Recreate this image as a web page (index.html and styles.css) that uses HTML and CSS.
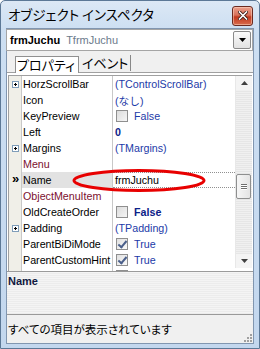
FILE: index.html
```html
<!DOCTYPE html>
<html lang="ja">
<head>
<meta charset="utf-8">
<link rel="stylesheet" href="styles.css">
</head>
<body>
<div class="window">
  <div class="titlebar">
    <span class="title">オブジェクト インスペクタ</span>
    <div class="close">
      <svg width="10" height="9" viewBox="0 0 10 9"><path d="M1.5 1 L8.5 8 M8.5 1 L1.5 8" stroke="#3a1a14" stroke-width="3.2" stroke-linecap="square"/><path d="M1.5 1 L8.5 8 M8.5 1 L1.5 8" stroke="#ffffff" stroke-width="1.6" stroke-linecap="square"/></svg>
    </div>
  </div>
  <div class="client">
    <div class="combo">
      <span class="cname">frmJuchu</span><span class="ctype">TfrmJuchu</span>
      <div class="dd"><svg width="7" height="4" viewBox="0 0 7 4"><path d="M0 0 H7 L3.5 4 Z" fill="#000"/></svg></div>
    </div>
    <div class="tabs">
      <div class="tab active">プロパティ</div>
      <div class="tab">イベント</div>
    </div>
    <div class="sheet">
      <div class="grid">
        <div class="rows">
          <div class="row"><div class="gut"><span class="plus"></span></div><div class="pname">HorzScrollBar</div><div class="pval">(TControlScrollBar)</div></div>
          <div class="row"><div class="gut"></div><div class="pname">Icon</div><div class="pval">(なし)</div></div>
          <div class="row"><div class="gut"></div><div class="pname">KeyPreview</div><div class="pval"><span class="chk"></span>False</div></div>
          <div class="row"><div class="gut"></div><div class="pname">Left</div><div class="pval bold">0</div></div>
          <div class="row"><div class="gut"><span class="plus"></span></div><div class="pname">Margins</div><div class="pval">(TMargins)</div></div>
          <div class="row"><div class="gut"></div><div class="pname ref">Menu</div><div class="pval"></div></div>
          <div class="row sel"><div class="gut"><span class="mark">»</span></div><div class="pname">Name</div><div class="pval edit">frmJuchu</div></div>
          <div class="row"><div class="gut"></div><div class="pname ref">ObjectMenuItem</div><div class="pval"></div></div>
          <div class="row"><div class="gut"></div><div class="pname">OldCreateOrder</div><div class="pval bold"><span class="chk"></span>False</div></div>
          <div class="row"><div class="gut"><span class="plus"></span></div><div class="pname">Padding</div><div class="pval">(TPadding)</div></div>
          <div class="row"><div class="gut"></div><div class="pname">ParentBiDiMode</div><div class="pval"><span class="chk on"></span>True</div></div>
          <div class="row"><div class="gut"></div><div class="pname">ParentCustomHint</div><div class="pval"><span class="chk on"></span>True</div></div>
          <div class="row"><div class="gut"></div><div class="pname"></div><div class="pval"><span class="chk"></span></div></div>
        </div>
        <div class="vscroll">
          <div class="sbtn"><svg width="7" height="4" viewBox="0 0 7 4"><path d="M0 4 H7 L3.5 0 Z" fill="#404040"/></svg></div>
          <div class="track">
            <div class="thumb"><span class="grip"></span><span class="grip"></span><span class="grip"></span></div>
          </div>
          <div class="sbtn"><svg width="7" height="4" viewBox="0 0 7 4"><path d="M0 0 H7 L3.5 4 Z" fill="#404040"/></svg></div>
        </div>
      </div>
    </div>
    <div class="help"><span class="hname">Name</span></div>
    <div class="status"><span>すべての項目が表示されています</span>
      <svg class="sizegrip" width="8" height="8" viewBox="0 0 8 8"><g fill="#a0a0a0"><rect x="6" y="0" width="2" height="2"/><rect x="3" y="3" width="2" height="2"/><rect x="6" y="3" width="2" height="2"/><rect x="0" y="6" width="2" height="2"/><rect x="3" y="6" width="2" height="2"/><rect x="6" y="6" width="2" height="2"/></g></svg>
    </div>
  </div>
  <svg class="mark-ellipse" width="260" height="349" viewBox="0 0 260 349"><ellipse cx="139" cy="180.5" rx="65" ry="10" fill="none" stroke="#e80000" stroke-width="3"/></svg>
</div>
</body>
</html>
```
FILE: styles.css
```css
* { box-sizing: border-box; }
html, body { margin: 0; padding: 0; }
body { width: 260px; height: 349px; overflow: hidden; background: #fff; }

.window {
  position: relative;
  width: 260px;
  height: 349px;
  border: 1px solid #5c7896;
  border-radius: 5px 5px 0 0;
  background: linear-gradient(#dce8f5 0px, #cddff2 28px, #c3d7ee 100%);
  padding: 0 5px 4px 5px;
  display: flex;
  flex-direction: column;
  font-family: "Liberation Sans", "Noto Sans CJK JP", sans-serif;
}

.titlebar {
  height: 27px;
  flex: none;
  display: flex;
  align-items: center;
  justify-content: space-between;
  padding: 0 1px 0 2px;
}
.title {
  font-family: "Noto Sans CJK JP", sans-serif;
  font-size: 13.5px;
  font-feature-settings: "palt";
  color: #000;
  margin-top: -1px;
}
.close {
  width: 21px;
  height: 20px;
  margin-top: 2px;
  border: 1px solid #6b2a20;
  border-radius: 3px;
  background: linear-gradient(#eba08c 0%, #d8715a 45%, #c2391f 55%, #d86b4c 100%);
  display: flex;
  align-items: center;
  justify-content: center;
  box-shadow: inset 0 0 0 1px rgba(255,220,200,0.5);
}

.client {
  flex: 1;
  display: flex;
  flex-direction: column;
  background: #f0f0f0;
  border: 1px solid #8196b0;
}

.combo {
  height: 22px;
  flex: none;
  background: #fff;
  border: 1px solid #a5a5a5;
  margin: 0 0 0 -1px;
  display: flex;
  align-items: center;
  padding-left: 3px;
  position: relative;
  font-size: 11px;
}
.cname { font-weight: bold; color: #000; }
.ctype { color: #6c7b8c; margin-left: 6px; }
.dd {
  position: absolute;
  right: 1px;
  top: 1px;
  width: 18px;
  height: 18px;
  border: 1px solid #8a8a8a;
  border-radius: 2px;
  background: linear-gradient(#fbfbfb, #e2e2e2);
  display: flex;
  align-items: center;
  justify-content: center;
}

.tabs {
  height: 22px;
  flex: none;
  display: flex;
  align-items: flex-end;
  padding-left: 8px;
  border-bottom: 1px solid #a0a0a0;
  font-family: "Noto Sans CJK JP", sans-serif;
  font-size: 13px;
  font-feature-settings: "palt";
}
.tab {
  height: 16px;
  line-height: 15px;
  padding: 0 2px 0 3px;
  border-right: 1px solid #888;
  margin-bottom: 1px;
  white-space: nowrap;
}
.tab.active {
  height: 17px;
  margin-bottom: -1px;
  line-height: 16px;
  background: #fff;
  border: 1px solid #909090;
  border-bottom: none;
  padding: 0 3px 0 1px;
}

.sheet {
  height: 198px;
  flex: none;
  padding: 2px 1px 0 1px;
  background: #fff;
}
.grid {
  height: 196px;
  border-top: 1px solid #a0a0a0;
  border-left: 1px solid #a0a0a0;
  display: flex;
  overflow: hidden;
}
.rows {
  flex: 1;
  overflow: hidden;
  font-size: 10.7px;
}
.row {
  height: 16px;
  display: grid;
  grid-template-columns: 13px 91px 1fr;
  align-items: stretch;
}
.gut {
  background: #f0efe8;
  border-right: 1px solid #c8c8c8;
  display: flex;
  align-items: center;
  justify-content: center;
  padding-left: 1px;
}
.plus {
  width: 7px;
  height: 7px;
  border: 1px solid #7f9db9;
  background: #fff;
  position: relative;
}
.plus::before { content: ""; position: absolute; left: 1px; top: 2px; width: 3px; height: 1px; background: #000; }
.plus::after { content: ""; position: absolute; left: 2px; top: 1px; width: 1px; height: 3px; background: #000; }
.mark { font-size: 13px; font-weight: bold; line-height: 12px; margin-top: -2px; color: #000; }
.pname {
  padding-left: 1px;
  border-right: 1px solid #c8c8c8;
  display: flex;
  align-items: center;
  color: #000;
  white-space: nowrap;
  overflow: hidden;
}
.pname.ref { color: #7c1030; }
.pval {
  padding-left: 2px;
  display: flex;
  align-items: center;
  color: #1c3aa8;
  white-space: nowrap;
  overflow: hidden;
}
.pval.bold { font-weight: bold; color: #0c2288; }
.row.sel .pname { background: #e2e2e2; }
.row.sel .pval {
  color: #000;
  border-top: 1px dotted #909090;
  border-bottom: 1px dotted #909090;
}
.chk {
  width: 12px;
  height: 12px;
  border: 1px solid #8f8f8f;
  background: linear-gradient(135deg, #dcdcdc, #f6f6f6);
  margin: 0 6px 0 1px;
  position: relative;
  flex: none;
}
.chk.on { background: linear-gradient(135deg, #e0e0e0, #fafafa); }
.chk.on::after {
  content: "";
  position: absolute;
  left: 3px;
  top: 0px;
  width: 3px;
  height: 7px;
  border-right: 2px solid #4a5f8a;
  border-bottom: 2px solid #4a5f8a;
  transform: rotate(40deg);
}

.vscroll {
  width: 17px;
  flex: none;
  height: 192px;
  display: flex;
  flex-direction: column;
  background: #f4f4f4;
  border-left: 1px solid #e8e8e8;
}
.sbtn {
  height: 14px;
  flex: none;
  display: flex;
  align-items: center;
  justify-content: center;
}
.track {
  flex: 1;
  position: relative;
  background: repeating-linear-gradient(#f0f0f0 0 1px, #e6e6e6 1px 2px);
}
.thumb {
  position: absolute;
  left: 0;
  right: 1px;
  top: 84px;
  height: 25px;
  border: 1px solid #8e8f8f;
  border-radius: 2px;
  background: linear-gradient(90deg, #f6f6f6, #e4e4e4);
  display: flex;
  flex-direction: column;
  align-items: center;
  justify-content: center;
  gap: 1px;
}
.grip { width: 6px; height: 1px; background: #6e6e6e; box-shadow: 0 1px 0 #fff; }

.help {
  height: 44px;
  flex: none;
  border-top: 1px solid #9a9a9a;
  border-bottom: 1px solid #9a9a9a;
  background: repeating-linear-gradient(#f4f4f4 0 1px, #ececec 1px 2px);
  padding: 3px 0 0 1px;
  font-size: 11px;
  line-height: 13px;
}
.hname { font-weight: bold; color: #101840; }

.status {
  flex: 1;
  display: flex;
  align-items: center;
  justify-content: space-between;
  padding: 0 0 0 1px;
  font-family: "Noto Sans CJK JP", sans-serif;
  font-size: 11.5px;
  font-feature-settings: "palt";
  color: #000;
  background: #f0f0f0;
  position: relative;
}
.sizegrip { align-self: flex-end; margin: 0 1px 1px 0; }

.mark-ellipse {
  position: absolute;
  left: -1px;
  top: -1px;
  pointer-events: none;
}
```
